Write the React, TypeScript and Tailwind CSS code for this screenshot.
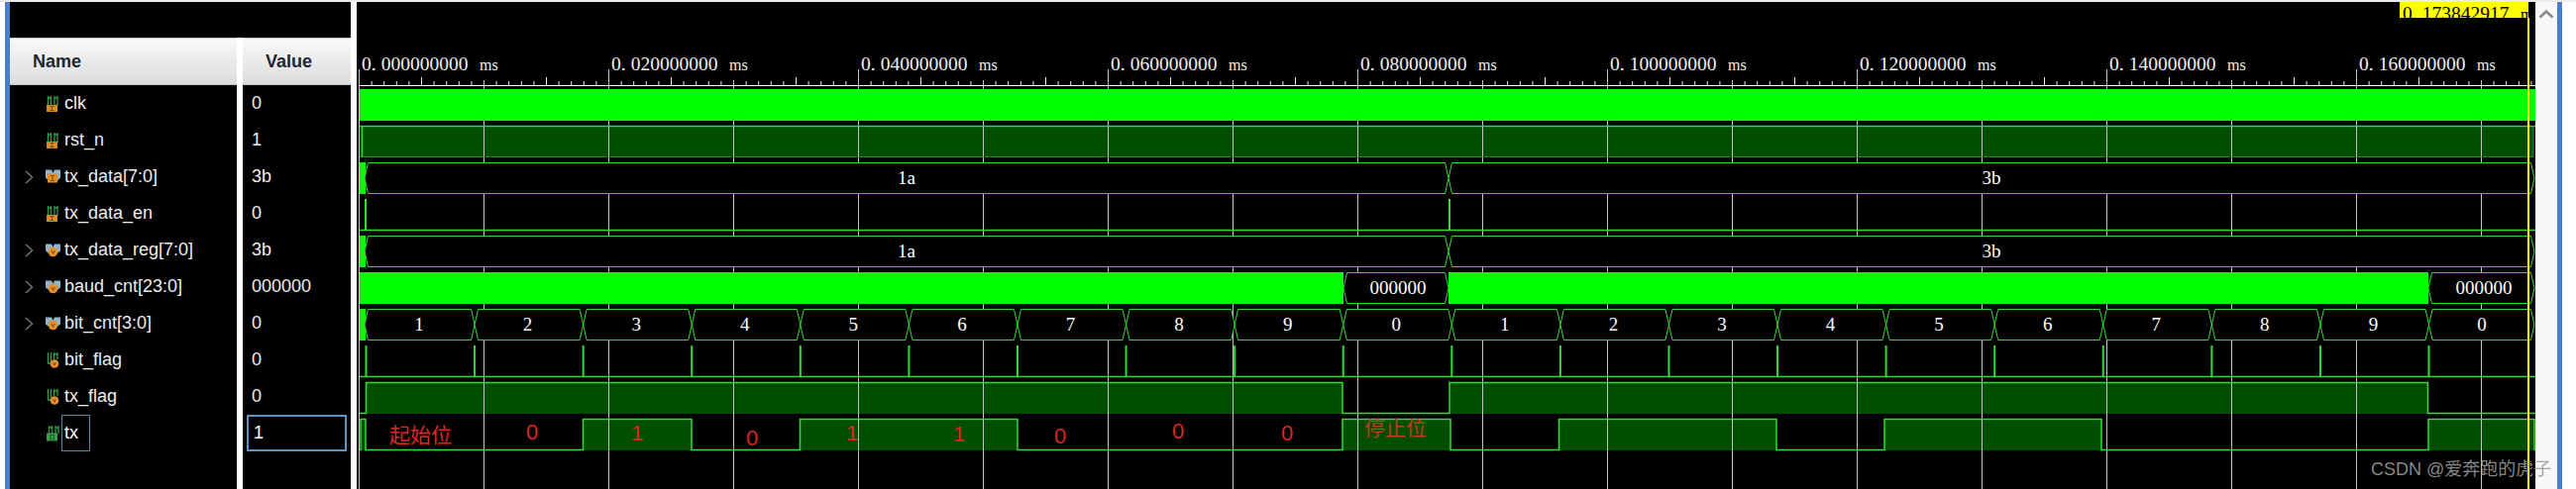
const X0 = 363;
const XEND = 2559;
const BIT = 109.58;
const bitX = (k: number) => 369.5 + BIT * k;
const rowTop = (n: number) => 90 + 37 * n;
const LINE = '#35d935';
const SOLID = '#00ff00';
const FILL = '#004f00';

type IconKind = 'in' | 'busIn' | 'bus' | 'reg' | 'out';

const signals: { name: string; value: string; icon: IconKind; expand?: boolean }[] = [
  { name: 'clk', value: '0', icon: 'in' },
  { name: 'rst_n', value: '1', icon: 'in' },
  { name: 'tx_data[7:0]', value: '3b', icon: 'busIn', expand: true },
  { name: 'tx_data_en', value: '0', icon: 'in' },
  { name: 'tx_data_reg[7:0]', value: '3b', icon: 'bus', expand: true },
  { name: 'baud_cnt[23:0]', value: '000000', icon: 'bus', expand: true },
  { name: 'bit_cnt[3:0]', value: '0', icon: 'bus', expand: true },
  { name: 'bit_flag', value: '0', icon: 'reg' },
  { name: 'tx_flag', value: '0', icon: 'reg' },
];

const txHigh: [number, number][] = [
  [364, 369], [588.5, 698], [807.5, 1027], [1355, 1464], [1573.5, 1793], [1902, 2121], [2451, 2558],
];

const flagHigh: [number, number][] = [
  [369.5, 1355], [1463, 2450.5],
];

const redNotes: [string, number, number][] = [
  ['0', 537, 436], ['1', 643, 437], ['0', 759, 442], ['1', 860, 437], ['1', 968, 438],
  ['0', 1070, 440], ['0', 1189, 435], ['0', 1299, 437],
];

const SignalIcon = ({ kind }: { kind: IconKind }) => {
  return (
    <svg width="16" height="18" viewBox="0 0 16 18" className="shrink-0">
      {kind === 'in' && (
        <>
          <path d="M2.5 1v10M5.5 1v10M9 1v10M12 1v10M2.5 3h3M9 3h3" fill="none" stroke="#2f9e44" strokeWidth="1.3" />
          <rect x="1" y="10" width="11" height="7" fill="#d98a2b" />
          <path d="M4.5 11.5h4M6.5 11.5v4M4.5 15.5h4" stroke="#7a4a10" strokeWidth="1" fill="none" />
        </>
      )}
      {kind === 'busIn' && (
        <>
          <path d="M0 1.5h6l1.5 3 1.5-3h6v8l-3 3H3l-3-3z" fill="#8fb3c7" />
          <rect x="2" y="5.5" width="10" height="9" fill="#e58f2a" />
          <path d="M5 7.5h4M7 7.5v5M5 12.5h4" stroke="#7a4a10" strokeWidth="1" fill="none" />
        </>
      )}
      {kind === 'bus' && (
        <>
          <path d="M0 2.5h6l1.5 3 1.5-3h6v7l-4 3H4l-4-3z" fill="#8fb3c7" />
          <circle cx="7.5" cy="10.5" r="4.8" fill="#e58f2a" />
          <path d="M6 9l1.5 3.5L9 9" stroke="#7a4a10" strokeWidth="1" fill="none" />
        </>
      )}
      {kind === 'reg' && (
        <>
          <path d="M2.5 1v11h3V1M8.5 1v7M12 1v7M8.5 3h3.5" fill="none" stroke="#2f9e44" strokeWidth="1.3" />
          <circle cx="9" cy="12.5" r="4.3" fill="#e58f2a" />
          <path d="M7.6 11l1.4 3.2 1.4-3.2" stroke="#7a4a10" strokeWidth="1" fill="none" />
        </>
      )}
      {kind === 'out' && (
        <>
          <path d="M3.5 1v8M6.5 1v8M10 1v8M13 1v8M3.5 3h3M10 3h3" fill="none" stroke="#2f9e44" strokeWidth="1.3" />
          <rect x="1" y="8.5" width="11" height="8" fill="#3f9e4a" />
          <rect x="5" y="10.5" width="3.5" height="4.5" fill="none" stroke="#17561f" strokeWidth="1" />
        </>
      )}
    </svg>
  );
};

const Chevron = () => (
  <svg width="9" height="14" viewBox="0 0 9 14" className="shrink-0">
    <path d="M1 1l6.5 6L1 13" fill="none" stroke="#777777" strokeWidth="1.4" />
  </svg>
);

const Hex = ({ x0, x1, y, label, labelX }: { x0: number; x1: number; y: number; label: string; labelX?: number }) => {
  const top = y + 0.5;
  const bot = y + 31.5;
  const mid = y + 16;
  return (
    <g>
      <path
        d={`M${x0} ${mid}L${x0 + 3.5} ${top}H${x1 - 3.5}L${x1} ${mid}L${x1 - 3.5} ${bot}H${x0 + 3.5}Z`}
        fill="#000000"
        stroke={LINE}
        strokeWidth="1"
      />
      <text
        x={labelX ?? (x0 + x1) / 2}
        y={mid + 6}
        textAnchor="middle"
        fill="#ffffff"
        className="font-['Liberation_Serif',serif] text-[19px]"
      >
        {label}
      </text>
    </g>
  );
};

const TimeLabel = ({ x, y, whole }: { x: number; y: number; whole: string }) => (
  <text x={x} y={y} className="font-['Liberation_Serif',serif] text-[19.5px]">
    {whole.slice(0, 2)}
    <tspan dx="5">{whole.slice(2)}</tspan>
  </text>
);

const Levels = ({ spans, top }: { spans: [number, number][]; top: number }) => {
  const hi = top + 0.5;
  const lo = top + 31.5;
  let d = `M${X0} ${lo}`;
  spans.forEach(([a, b]) => {
    d += `H${a}V${hi}H${b}V${lo}`;
  });
  d += `H${XEND}`;
  return <path d={d} fill="none" stroke={LINE} strokeWidth="1.5" />;
};

const Waves = () => {
  const minor = Array.from({ length: 175 }, (_, i) => i);
  const grid = Array.from({ length: 18 }, (_, i) => 362.5 + 126 * i);
  const bits = Array.from({ length: 20 }, (_, k) => k);
  return (
    <svg width="2199" height="492" viewBox="360 2 2199 492" className="block shrink-0 bg-black">
      <defs>
        <clipPath id="cursor-label">
          <rect x="2422" y="2" width="130" height="16" />
        </clipPath>
      </defs>

      {/* dark filled highs go under the grid */}
      <rect x={X0} y={rowTop(1)} width={2194} height={32} fill={FILL} />
      {flagHigh.map(([a, b]) => (
        <rect key={a} x={a} y={rowTop(8)} width={b - a} height={32} fill={FILL} />
      ))}
      {txHigh.map(([a, b]) => (
        <rect key={a} x={a} y={rowTop(9)} width={b - a} height={32} fill={FILL} />
      ))}

      {/* time axis */}
      <path d={`M${X0} 86.5H${XEND}`} stroke="#ffffff" strokeWidth="1" />
      {minor.map((i) => (
        <path
          key={i}
          d={`M${362.5 + 12.6 * i} ${i % 5 === 0 && i % 10 !== 0 ? 78 : 82}V86`}
          stroke="#e8e8e8"
          strokeWidth="1"
        />
      ))}
      {grid.map((x, i) => (
        <path
          key={x}
          d={`M${x} ${i % 2 === 0 ? 70 : 81}V494`}
          stroke="#c4c4c4"
          strokeWidth="1"
        />
      ))}
      <g fill="#f2f2f2">
        {Array.from({ length: 9 }, (_, i) => (
          <g key={i}>
            <TimeLabel x={365 + 252 * i} y={71} whole={`0.${String(i * 2).padStart(2, '0')}0000000`} />
            <text x={365 + 252 * i + 119} y={71} className="font-['Liberation_Serif',serif] text-[16px]">
              ms
            </text>
          </g>
        ))}
      </g>

      {/* clk */}
      <rect x={X0} y={rowTop(0)} width={XEND - X0} height={32} fill={SOLID} />

      {/* rst_n */}
      <path d={`M${X0} 127.5H${XEND}`} stroke={LINE} strokeWidth="1.5" />
      <path d="M365.5 127V159" stroke={LINE} strokeWidth="1.5" />
      <path d={`M${X0} 158.5H2557V127`} fill="none" stroke="#2b8a2b" strokeWidth="1" />

      {/* tx_data */}
      <rect x={X0} y={rowTop(2)} width={6} height={32} fill={SOLID} />
      <Hex x0={368} x1={1462} y={rowTop(2)} label="1a" labelX={915} />
      <Hex x0={1462} x1={2558} y={rowTop(2)} label="3b" labelX={2010} />

      {/* tx_data_en */}
      <path d={`M${X0} 232.5H${XEND}`} stroke={LINE} strokeWidth="1.5" />
      {[369, 1463].map((x) => (
        <path key={x} d={`M${x} 201V232`} stroke={LINE} strokeWidth="2" />
      ))}

      {/* tx_data_reg */}
      <rect x={X0} y={rowTop(4)} width={6} height={32} fill={SOLID} />
      <Hex x0={368} x1={1462} y={rowTop(4)} label="1a" labelX={915} />
      <Hex x0={1462} x1={2558} y={rowTop(4)} label="3b" labelX={2010} />

      {/* baud_cnt */}
      <rect x={X0} y={rowTop(5)} width={1356 - X0} height={32} fill={SOLID} />
      <Hex x0={1356} x1={1462} y={rowTop(5)} label="000000" labelX={1411} />
      <rect x={1462} y={rowTop(5)} width={2451 - 1462} height={32} fill={SOLID} />
      <Hex x0={2451} x1={2558} y={rowTop(5)} label="000000" labelX={2507} />

      {/* bit_cnt */}
      <rect x={X0} y={rowTop(6)} width={6} height={32} fill={SOLID} />
      {bits.map((k) => (
        <Hex
          key={k}
          x0={k === 0 ? 368 : bitX(k)}
          x1={k === 19 ? 2558 : bitX(k + 1)}
          y={rowTop(6)}
          label={String((k + 1) % 10)}
          labelX={423 + BIT * k}
        />
      ))}

      {/* bit_flag */}
      <path d={`M${X0} 380.5H${XEND}`} stroke={LINE} strokeWidth="1.5" />
      {bits.map((k) => (
        <path key={k} d={`M${bitX(k)} 349V380`} stroke={LINE} strokeWidth="2" />
      ))}

      <Levels spans={flagHigh} top={rowTop(8)} />
      <Levels spans={txHigh} top={rowTop(9)} />

      {/* hand written notes */}
      <g fill="#dc2626" className="font-['Noto_Sans_CJK_SC',sans-serif]">
        {redNotes.map(([t, x, y]) => (
          <text key={x} x={x} y={y + 8} textAnchor="middle" className="font-['Liberation_Sans',sans-serif] text-[22px]">
            {t}
          </text>
        ))}
        <text x={393} y={447} className="text-[21px]">
          起始位
        </text>
        <text x={1377} y={440} className="text-[21px]" fill="#c23a20">
          停止位
        </text>
      </g>

      {/* cursor */}
      <path d="M2552 18V494" stroke="#ffff00" strokeWidth="2" />
      <rect x="2422" y="2" width="130" height="16" fill="#ffff00" />
      <g clipPath="url(#cursor-label)" fill="#000000">
        <TimeLabel x={2425} y={20} whole="0.173842917" />
        <text x={2544} y={20} className="font-['Liberation_Serif',serif] text-[16px]">
          m
        </text>
      </g>
    </svg>
  );
};

const App = () => {
  return (
    <div className="relative flex h-[494px] w-[2600px] overflow-hidden bg-white pt-[2px] font-['Liberation_Sans',sans-serif] text-[18px]">
      <div className="absolute inset-x-0 top-0 h-[2px] bg-[#ececec]" />
      <div className="ml-[5px] w-[5px] shrink-0 bg-[#4a7ecb]" />

      <div className="flex w-[344px] shrink-0 flex-col">
        <div className="h-9 shrink-0 bg-black" />
        <div className="flex flex-1">
          <div className="flex w-[229px] flex-col bg-black text-[#ececec]">
            <div className="flex h-12 shrink-0 items-center border-y border-[#c4c4c4] bg-gradient-to-b from-[#f9f9f9] to-[#dcdcdc] pl-[23px] font-bold text-[#1c2733]">
              Name
            </div>
            {signals.map((s) => (
              <div key={s.name} className="flex h-[37px] items-center pl-[15px]">
                <div className="w-[21px] shrink-0">{s.expand && <Chevron />}</div>
                <SignalIcon kind={s.icon} />
                <span className="ml-[3px] whitespace-nowrap">{s.name}</span>
              </div>
            ))}
            <div className="flex h-[37px] items-center pl-[36px]">
              <SignalIcon kind="out" />
              <span className="box-border ml-0 flex h-[37px] w-[29px] items-center border border-[#5b86b0] pl-[2px] text-white">
                tx
              </span>
            </div>
          </div>

          <div className="w-[6px] shrink-0 bg-white" />

          <div className="flex w-[109px] flex-col bg-black text-[#ececec]">
            <div className="flex h-12 shrink-0 items-center border-y border-[#c4c4c4] bg-gradient-to-b from-[#f9f9f9] to-[#dcdcdc] pl-[23px] font-bold text-[#1c2733]">
              Value
            </div>
            {signals.map((s) => (
              <div key={s.name} className="flex h-[37px] items-center pl-[9px]">
                {s.value}
              </div>
            ))}
            <div className="ml-[4px] flex h-[37px] w-[101px] items-center border-2 border-[#5b94c8] pl-[5px] text-white">
              1
            </div>
          </div>
        </div>
      </div>

      <div className="w-[6px] shrink-0 bg-white" />

      <Waves />

      <div className="flex w-[22px] shrink-0 justify-center bg-[#f7f7f7] pt-[7px]">
        <svg width="16" height="10" viewBox="0 0 16 10">
          <path d="M1.5 8.5L8 2.5l6.5 6" fill="none" stroke="#8a8a8a" strokeWidth="2.6" />
        </svg>
      </div>
      <div className="w-[5px] shrink-0 bg-[#4a7ecb]" />

      <div className="absolute left-[2393px] top-[462px] whitespace-nowrap font-['Liberation_Sans','Noto_Sans_CJK_SC',sans-serif] text-[18px] leading-6 text-[#9a9a9a]/90">
        CSDN @爱奔跑的虎子
      </div>
    </div>
  );
};

export default App;
